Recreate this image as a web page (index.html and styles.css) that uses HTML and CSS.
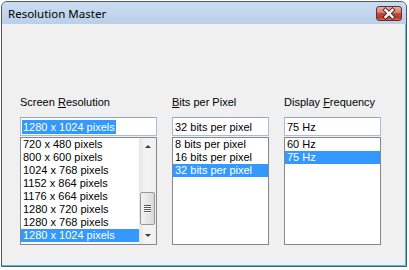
FILE: index.html
```html
<!DOCTYPE html>
<html>
<head>
<meta charset="utf-8">
<link rel="stylesheet" href="styles.css">
</head>
<body>
<div class="window">
  <div class="titlebar">
    <span class="title">Resolution Master</span>
    <div class="close">
      <svg width="26" height="15" viewBox="0 0 26 15">
        <path d="M9.5 4 L16.5 11 M16.5 4 L9.5 11" stroke="#4a2a2a" stroke-width="4.2" stroke-linecap="square" fill="none"/>
        <path d="M9.5 4 L16.5 11 M16.5 4 L9.5 11" stroke="#ffffff" stroke-width="2.4" stroke-linecap="square" fill="none"/>
      </svg>
    </div>
  </div>
  <div class="client">
    <div class="columns">
      <div class="col col-wide">
        <div class="label">Screen <u>R</u>esolution</div>
        <div class="edit"><span class="sel">1280 x 1024 pixels</span></div>
        <div class="list">
          <div class="items">
            <div class="item">720 x 480 pixels</div>
            <div class="item">800 x 600 pixels</div>
            <div class="item">1024 x 768 pixels</div>
            <div class="item">1152 x 864 pixels</div>
            <div class="item">1176 x 664 pixels</div>
            <div class="item">1280 x 720 pixels</div>
            <div class="item">1280 x 768 pixels</div>
            <div class="item selected">1280 x 1024 pixels</div>
          </div>
          <div class="scrollbar">
            <div class="sb-btn"><span class="arrow-up"></span></div>
            <div class="sb-track">
              <div class="sb-thumb">
                <span class="grip"></span><span class="grip"></span><span class="grip"></span><span class="grip"></span>
              </div>
            </div>
            <div class="sb-btn"><span class="arrow-down"></span></div>
          </div>
        </div>
      </div>
      <div class="col">
        <div class="label"><u>B</u>its per Pixel</div>
        <div class="edit"><span class="txt">32 bits per pixel</span></div>
        <div class="list">
          <div class="items">
            <div class="item">8 bits per pixel</div>
            <div class="item">16 bits per pixel</div>
            <div class="item selected">32 bits per pixel</div>
          </div>
        </div>
      </div>
      <div class="col">
        <div class="label">Display <u>F</u>requency</div>
        <div class="edit"><span class="txt">75 Hz</span></div>
        <div class="list">
          <div class="items">
            <div class="item">60 Hz</div>
            <div class="item selected">75 Hz</div>
          </div>
        </div>
      </div>
    </div>
  </div>
</div>
</body>
</html>
```

FILE: styles.css
```css
* { box-sizing: border-box; }
html, body { margin: 0; padding: 0; background: #ffffff; }
body { font-family: "Liberation Sans", Arial, sans-serif; font-size: 11px; color: #000; }

.window {
  margin: 1px 0 0 1px;
  width: 406px;
  height: 266px;
  border: 1px solid #505860;
  border-radius: 6px 6px 0 0;
  display: flex;
  flex-direction: column;
  overflow: hidden;
  background: #bcd2ea;
}

.titlebar {
  height: 22px;
  flex: none;
  display: flex;
  justify-content: space-between;
  align-items: flex-start;
  padding: 4px 4px 0 6px;
  background: linear-gradient(#cadcf0, #bad0e9);
}
.title {
  font-family: "Noto Sans", "Open Sans", sans-serif;
  font-size: 11.5px;
  line-height: 16px;
  color: #000;
}
.close {
  width: 26px;
  height: 15px;
  border: 1px solid #6b2f2a;
  border-radius: 3px;
  background: linear-gradient(#e8aea6 0%, #d27a70 45%, #c04a3c 50%, #b7392c 80%, #cf6a52 100%);
  display: flex;
  align-items: center;
  justify-content: center;
  overflow: hidden;
}
.close svg { display: block; margin: -1px; }

.client {
  flex: 1;
  background: #f0f0f0;
  border-right: 1px solid #48c4e8;
  border-bottom: 1px solid #48c4e8;
  padding: 72px 0 0 18px;
}

.columns {
  display: flex;
  gap: 15px;
}
.col { width: 97px; display: flex; flex-direction: column; }
.col-wide { width: 137px; }

.label {
  line-height: 13px;
  height: 13px;
  margin-bottom: 8px;
  white-space: nowrap;
}
.label u { text-decoration-thickness: 1px; text-underline-offset: 1px; }

.edit {
  height: 19px;
  background: #fff;
  border: 1px solid #a9bcd2;
  border-top-color: #92a8c0;
  display: flex;
  align-items: center;
  padding-left: 2px;
  white-space: nowrap;
}
.edit .sel {
  background: #3399ff;
  color: #fff;
  line-height: 14px;
  height: 14px;
  padding: 0 1px;
  margin-left: -1px;
}
.edit .txt { line-height: 14px; }

.list {
  margin-top: 1px;
  height: 108px;
  background: #fff;
  border: 1px solid #828790;
  display: flex;
}
.items { flex: 1; }
.item {
  height: 13px;
  line-height: 13px;
  padding-left: 2px;
  white-space: nowrap;
}
.item.selected { background: #3399ff; color: #fff; }

.scrollbar {
  width: 17px;
  display: flex;
  flex-direction: column;
  background: linear-gradient(90deg, #e6e6e6, #f4f4f4 40%, #f0f0f0);
}
.sb-btn {
  height: 17px;
  flex: none;
  display: flex;
  align-items: center;
  justify-content: center;
}
.arrow-up {
  width: 0; height: 0;
  border-left: 3px solid transparent;
  border-right: 3px solid transparent;
  border-bottom: 3px solid #3c3c3c;
}
.arrow-down {
  width: 0; height: 0;
  border-left: 3px solid transparent;
  border-right: 3px solid transparent;
  border-top: 3px solid #3c3c3c;
}
.sb-track { flex: 1; padding-top: 37px; }
.sb-thumb {
  height: 33px;
  margin: 0 1px;
  border: 1px solid #979797;
  border-radius: 2px;
  background: linear-gradient(90deg, #f2f2f2, #e6e6e6 50%, #d8d8d8);
  display: flex;
  flex-direction: column;
  align-items: center;
  justify-content: center;
  gap: 1px;
}
.grip {
  width: 7px;
  height: 1px;
  background: #555;
  box-shadow: 0 1px 0 #ffffff;
}
```
